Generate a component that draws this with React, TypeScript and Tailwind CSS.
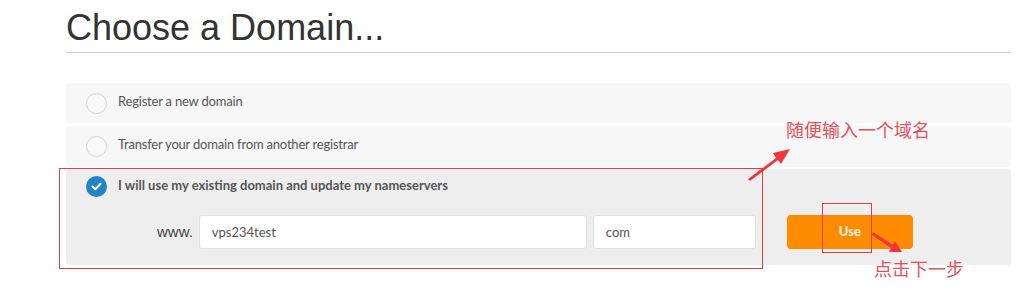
import React from "react";

const lato = { fontFamily: "Lato, 'Open Sans', sans-serif" };

function Radio({ checked }: { checked?: boolean }) {
  if (checked) {
    return (
      <span className="flex h-[21px] w-[21px] shrink-0 items-center justify-center rounded-full bg-[#2384c6]">
        <svg width="11" height="9" viewBox="0 0 11 9" fill="none">
          <path d="M1.5 4.5 L4.3 7.2 L9.5 1.8" stroke="#fff" strokeWidth="2" strokeLinecap="round" strokeLinejoin="round" />
        </svg>
      </span>
    );
  }
  return <span className="h-[21px] w-[21px] shrink-0 rounded-full border border-[#d2d2d2] bg-[#f9f9f9]" />;
}

export default function App() {
  return (
    <div className="relative h-[297px] w-[1029px] overflow-hidden bg-white">
      <div className="ml-[66px] w-[945px]">
        <h1 className="mt-[10px] border-b border-[#cfcfcf] pb-[6px] font-['Liberation_Sans',Arial,sans-serif] text-[36px] leading-[36px] text-[#333]">
          Choose a Domain...
        </h1>

        <div className="mt-[30px] flex flex-col text-[13px] text-[#555]" style={lato}>
          <label className="flex h-[40px] items-center gap-[11px] rounded-[4px] bg-[#f7f7f7] pl-[20px]">
            <Radio />
            <span className="mb-[3px] tracking-[-0.2px]">Register a new domain</span>
          </label>
          <label className="mt-[3px] flex h-[41px] items-center gap-[11px] rounded-[4px] bg-[#f7f7f7] pl-[20px]">
            <Radio />
            <span className="mb-[3px] tracking-[-0.2px]">Transfer your domain from another registrar</span>
          </label>
          <div className="mt-[2px] flex h-[96px] flex-col rounded-[4px] bg-[#eeeeee] pl-[20px] pt-[7px]">
            <label className="flex items-center gap-[11px]">
              <Radio checked />
              <span className="mb-[1px] font-bold text-[#555]">I will use my existing domain and update my nameservers</span>
            </label>
            <div className="mt-[18px] flex items-center">
              <span className="ml-[71px] mr-[6px] font-['Liberation_Sans',Arial,sans-serif] text-[15px] text-[#444]">www.</span>
              <input
                readOnly
                value="vps234test"
                className="h-[34px] w-[388px] rounded-[3px] border border-[#e2e2e2] bg-white pl-[12px] text-[13px] text-[#555] outline-none"
                style={lato}
              />
              <input
                readOnly
                value="com"
                className="ml-[6px] h-[34px] w-[163px] rounded-[3px] border border-[#e2e2e2] bg-white pl-[12px] text-[13px] text-[#555] outline-none"
                style={lato}
              />
              <button className="ml-[31px] h-[34px] w-[126px] rounded-[4px] bg-[#ff8c00] text-[13px] font-bold text-[#fff8ec]" style={lato}>
                Use
              </button>
            </div>
          </div>
        </div>
      </div>

      {/* annotations */}
      <div className="pointer-events-none absolute left-[59px] top-[168px] h-[101px] w-[704px] border border-[#d8414a]" />
      <div className="pointer-events-none absolute left-[822px] top-[203px] h-[50px] w-[50px] border border-[#d8414a]" />
      <span className="absolute left-[786px] top-[117px] font-['Noto_Sans_CJK_SC',sans-serif] text-[18px] leading-[24px] text-[#e4505a]">
        随便输入一个域名
      </span>
      <span className="absolute left-[874px] top-[256px] font-['Noto_Sans_CJK_SC',sans-serif] text-[18px] leading-[24px] text-[#e4505a]">
        点击下一步
      </span>
      <svg className="absolute left-0 top-0" width="1029" height="297" viewBox="0 0 1029 297">
        <path d="M748 179 L776 158 L773 153 L790 149 L781 164 L778 160 L750 181 Z" fill="#f0363c" />
        <path d="M873 232 L893 245 L895 241 L902 252 L889 252 L891 248 L872 235 Z" fill="#f0363c" />
      </svg>
    </div>
  );
}
